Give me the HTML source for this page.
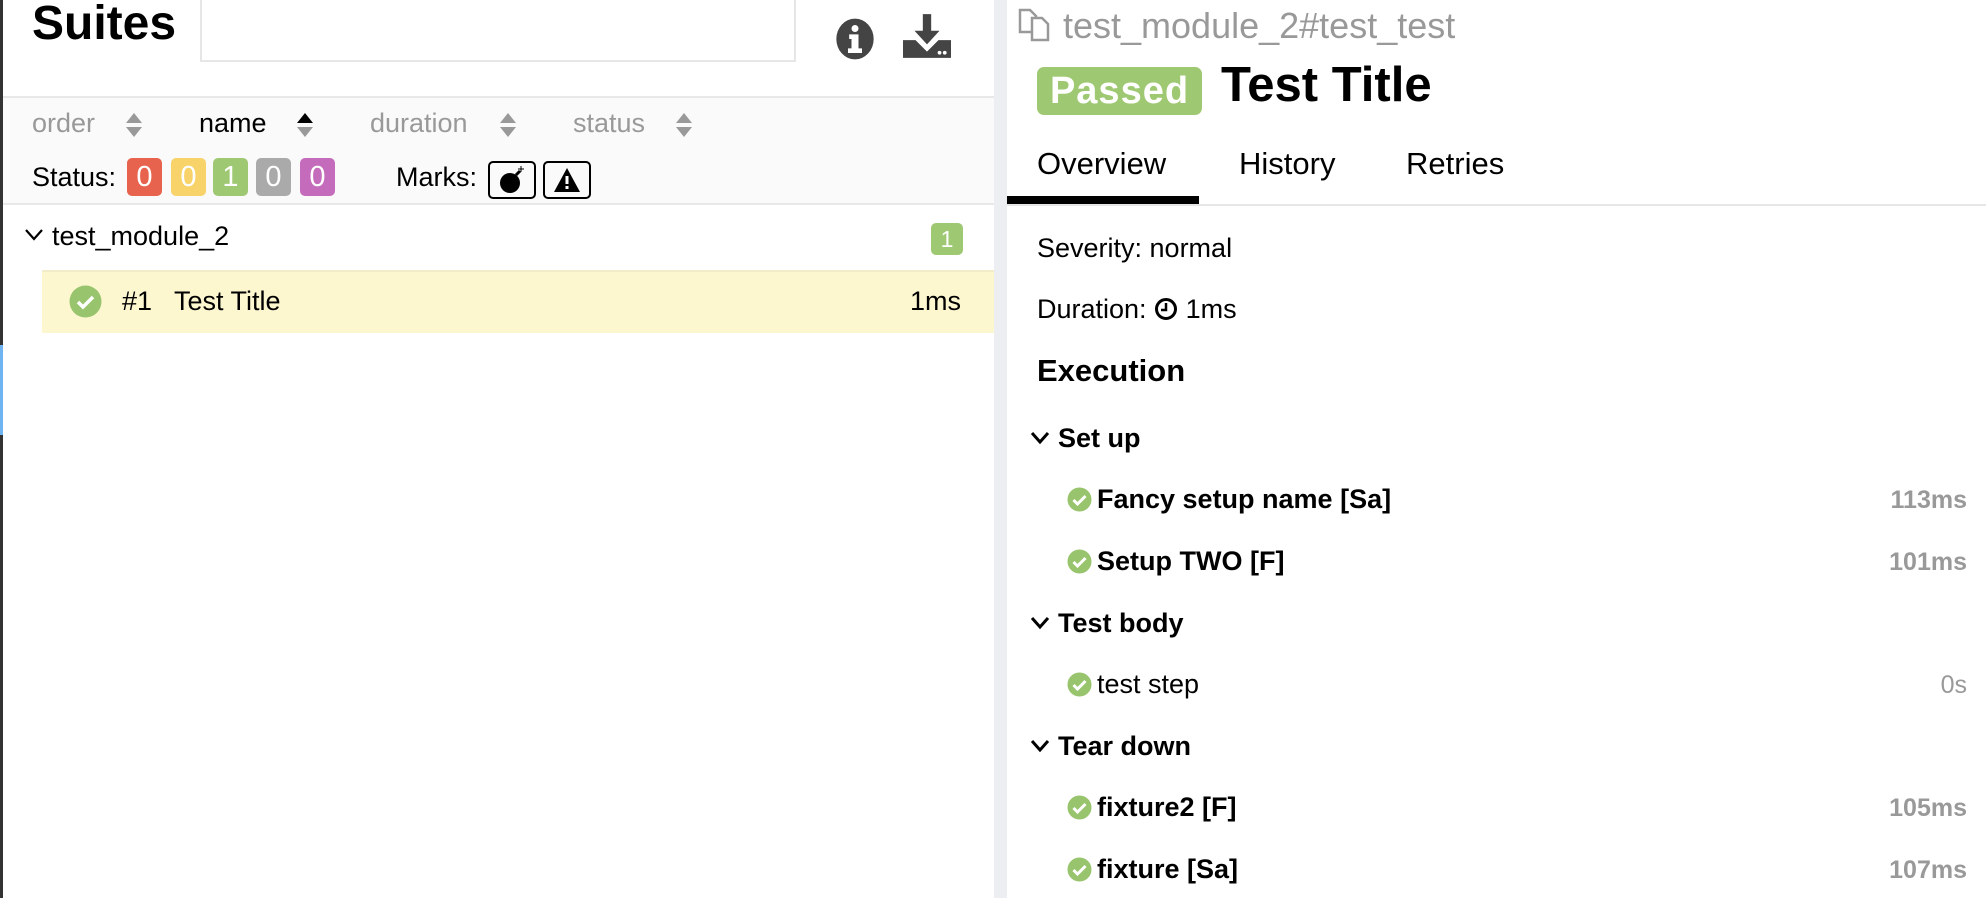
<!DOCTYPE html>
<html><head><meta charset="utf-8"><style>
*{margin:0;padding:0;box-sizing:border-box}
body{width:1986px;height:898px;overflow:hidden;background:#fff;font-family:"Liberation Sans",Arial,sans-serif;color:#000;position:relative}
.a{position:absolute;white-space:nowrap}
.badge{position:absolute;width:35px;height:38px;border-radius:5px;color:#fff;font-size:29px;text-align:center;line-height:38px}
.mark{position:absolute;width:48px;height:38px;border:2px solid #000;border-radius:5px;top:161px}
.chk{position:absolute}
.step{font-size:27px;font-weight:bold}
.dur{position:absolute;right:19px;color:#999;font-size:25px;font-weight:bold}
</style></head><body>
<div class="a" style="left:0;top:0;width:3px;height:898px;background:#333"></div>
<div class="a" style="left:0;top:345px;width:3px;height:90px;background:#6fb3f0"></div>
<div class="a" style="left:994px;top:0;width:13px;height:898px;background:#eceef1"></div>

<div class="a" style="left:32px;top:-4px;font-size:48px;font-weight:bold">Suites</div>
<div class="a" style="left:200px;top:0;width:596px;height:62px;border:2px solid #e6e6e6;border-top:none"></div>
<svg class="a" style="left:834px;top:18px" width="42" height="42" viewBox="0 0 34 36"><ellipse cx="17" cy="18" rx="16" ry="17.5" fill="#444"/><circle cx="17" cy="9" r="3" fill="#fff"/><path d="M12 14h8v12h3v4H11v-4h3v-8h-2z" fill="#fff"/></svg>
<svg class="a" style="left:903px;top:14px" width="48" height="44" viewBox="0 0 46 42"><path d="M19 0h8v16h8L23 29 11 16h8z" fill="#444"/><path d="M0 25h12l11 11 11-11h12v17H0z" fill="#444"/><circle cx="35" cy="37" r="1.8" fill="#fff"/><circle cx="40" cy="37" r="1.8" fill="#fff"/></svg>

<div class="a" style="left:3px;top:96px;width:991px;height:109px;background:#fafafa;border-top:2px solid #e8e8e8;border-bottom:2px solid #e8e8e8"></div>
<div class="a" style="left:32px;top:108px;font-size:27px;color:#999">order</div>
<div class="a" style="left:199px;top:108px;font-size:27px">name</div>
<div class="a" style="left:370px;top:108px;font-size:27px;color:#999">duration</div>
<div class="a" style="left:573px;top:108px;font-size:27px;color:#999">status</div>
<svg class="a" style="left:125px;top:112px" width="18" height="26"><path d="M9 1l8 10H1z M9 25l8-10H1z" fill="#999"/></svg>
<svg class="a" style="left:296px;top:112px" width="18" height="26"><path d="M9 1l8 10H1z" fill="#000"/><path d="M9 25l8-10H1z" fill="#999"/></svg>
<svg class="a" style="left:499px;top:112px" width="18" height="26"><path d="M9 1l8 10H1z M9 25l8-10H1z" fill="#999"/></svg>
<svg class="a" style="left:675px;top:112px" width="18" height="26"><path d="M9 1l8 10H1z M9 25l8-10H1z" fill="#999"/></svg>

<div class="a" style="left:32px;top:162px;font-size:27px">Status:</div>
<div class="badge" style="left:127px;top:158px;background:#e8634d">0</div>
<div class="badge" style="left:171px;top:158px;background:#f8d36a">0</div>
<div class="badge" style="left:213px;top:158px;background:#9fc873">1</div>
<div class="badge" style="left:256px;top:158px;background:#aaa">0</div>
<div class="badge" style="left:300px;top:158px;background:#c56bbc">0</div>
<div class="a" style="left:396px;top:162px;font-size:27px">Marks:</div>
<div class="mark" style="left:488px"><svg width="44" height="34"><circle cx="20" cy="20" r="10" fill="#000"/><path d="M26 12l4-4" stroke="#000" stroke-width="3"/><path d="M31 3v6M28 6h6" stroke="#000" stroke-width="1"/></svg></div>
<div class="mark" style="left:543px"><svg width="44" height="34"><path d="M22 5L35 29H9z" fill="#000"/><rect x="20.5" y="13" width="3" height="8" fill="#fff"/><rect x="20.5" y="23" width="3" height="3" fill="#fff"/></svg></div>

<svg class="a" style="left:24px;top:228px" width="20" height="14"><path d="M2 2l8 9 8-9" stroke="#000" stroke-width="2.2" fill="none"/></svg>
<div class="a" style="left:52px;top:221px;font-size:27px">test_module_2</div>
<div class="badge" style="left:931px;top:223px;width:32px;height:32px;line-height:32px;font-size:23px;background:#9fc873">1</div>

<div class="a" style="left:42px;top:270px;width:952px;height:63px;background:#fdf7d0;border-top:2px solid #f2eccb"></div>
<svg class="chk" style="left:69px;top:285px" width="33" height="33"><circle cx="16.5" cy="16.5" r="16" fill="#97c46c"/><path d="M9 17l5 5 10-10" stroke="#fff" stroke-width="3.5" fill="none"/></svg>
<div class="a" style="left:122px;top:286px;font-size:27px">#1</div>
<div class="a" style="left:174px;top:286px;font-size:27px">Test Title</div>
<div class="a" style="left:910px;top:286px;font-size:27px">1ms</div>

<!-- right -->
<svg class="a" style="left:1016px;top:6px" width="40" height="38" viewBox="0 0 40 38"><path d="M4 4h10l6 6v16H4z" fill="none" stroke="#999" stroke-width="2.5"/><path d="M16 12h10l6 6v16H16z" fill="#fff" stroke="#999" stroke-width="2.5"/></svg>
<div class="a" style="left:1063px;top:5px;font-size:36px;color:#999">test_module_2#test_test</div>
<div class="a" style="left:1037px;top:67px;width:165px;height:48px;background:#9fc873;border-radius:7px;color:#fff;font-size:38px;font-weight:bold;text-align:center;line-height:48px;letter-spacing:1px">Passed</div>
<div class="a" style="left:1221px;top:57px;font-size:49px;font-weight:bold">Test Title</div>
<div class="a" style="left:1037px;top:146px;font-size:31px">Overview</div>
<div class="a" style="left:1239px;top:146px;font-size:31px">History</div>
<div class="a" style="left:1406px;top:146px;font-size:31px">Retries</div>
<div class="a" style="left:1007px;top:204px;width:979px;height:2px;background:#e6e6e6"></div>
<div class="a" style="left:1007px;top:196px;width:192px;height:8px;background:#000"></div>

<div class="a" style="left:1037px;top:233px;font-size:27px">Severity: normal</div>
<div class="a" style="left:1037px;top:294px;font-size:27px">Duration: <svg width="24" height="24" style="vertical-align:-3px" viewBox="0 0 24 24"><circle cx="12" cy="12" r="9.5" stroke="#000" stroke-width="3" fill="none"/><path d="M12 6v7h-5" stroke="#000" stroke-width="2.5" fill="none"/></svg> 1ms</div>
<div class="a" style="left:1037px;top:353px;font-size:31px;font-weight:bold">Execution</div>

<svg class="a" style="left:1030px;top:431px" width="20" height="14"><path d="M2 2l8 9 8-9" stroke="#000" stroke-width="3" fill="none"/></svg>
<div class="a step" style="left:1058px;top:423px">Set up</div>
<svg class="a" style="left:1067px;top:487px" width="25" height="25"><circle cx="12.5" cy="12.5" r="12" fill="#97c46c"/><path d="M6.5 13l4 4 8-8" stroke="#fff" stroke-width="3" fill="none"/></svg>
<div class="a step" style="left:1097px;top:484px">Fancy setup name [Sa]</div>
<div class="dur" style="top:486px">113ms</div>
<svg class="a" style="left:1067px;top:549px" width="25" height="25"><circle cx="12.5" cy="12.5" r="12" fill="#97c46c"/><path d="M6.5 13l4 4 8-8" stroke="#fff" stroke-width="3" fill="none"/></svg>
<div class="a step" style="left:1097px;top:546px">Setup TWO [F]</div>
<div class="dur" style="top:548px">101ms</div>

<svg class="a" style="left:1030px;top:616px" width="20" height="14"><path d="M2 2l8 9 8-9" stroke="#000" stroke-width="3" fill="none"/></svg>
<div class="a step" style="left:1058px;top:608px">Test body</div>
<svg class="a" style="left:1067px;top:672px" width="25" height="25"><circle cx="12.5" cy="12.5" r="12" fill="#97c46c"/><path d="M6.5 13l4 4 8-8" stroke="#fff" stroke-width="3" fill="none"/></svg>
<div class="a" style="left:1097px;top:669px;font-size:27px">test step</div>
<div class="dur" style="top:671px;font-weight:normal">0s</div>

<svg class="a" style="left:1030px;top:739px" width="20" height="14"><path d="M2 2l8 9 8-9" stroke="#000" stroke-width="3" fill="none"/></svg>
<div class="a step" style="left:1058px;top:731px">Tear down</div>
<svg class="a" style="left:1067px;top:795px" width="25" height="25"><circle cx="12.5" cy="12.5" r="12" fill="#97c46c"/><path d="M6.5 13l4 4 8-8" stroke="#fff" stroke-width="3" fill="none"/></svg>
<div class="a step" style="left:1097px;top:792px">fixture2 [F]</div>
<div class="dur" style="top:794px">105ms</div>
<svg class="a" style="left:1067px;top:857px" width="25" height="25"><circle cx="12.5" cy="12.5" r="12" fill="#97c46c"/><path d="M6.5 13l4 4 8-8" stroke="#fff" stroke-width="3" fill="none"/></svg>
<div class="a step" style="left:1097px;top:854px">fixture [Sa]</div>
<div class="dur" style="top:856px">107ms</div>
</body></html>
